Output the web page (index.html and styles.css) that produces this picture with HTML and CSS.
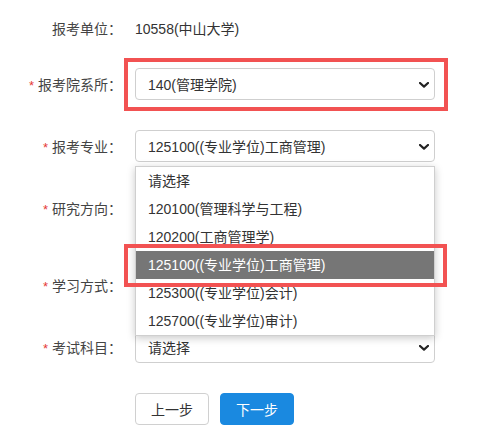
FILE: index.html
```html
<!DOCTYPE html>
<html lang="zh-CN">
<head>
<meta charset="utf-8">
<title>报考信息</title>
<link rel="stylesheet" href="styles.css">
</head>
<body>
<div class="form">
  <div class="row row-first">
    <div class="label">报考单位：</div>
    <div class="field"><span class="value">10558(中山大学)</span></div>
  </div>
  <div class="row">
    <div class="label"><span class="req">*</span>报考院系所：</div>
    <div class="field">
      <div class="select">
        <span>140(管理学院)</span>
        <svg class="chev" width="10" height="6" viewBox="0 0 10 6"><path d="M1 1L5 4.6L9 1" fill="none" stroke="#222" stroke-width="2.2" stroke-linecap="round" stroke-linejoin="round"/></svg>
      </div>
      <div class="mark mark-1"></div>
    </div>
  </div>
  <div class="row">
    <div class="label"><span class="req">*</span>报考专业：</div>
    <div class="field">
      <div class="select">
        <span>125100((专业学位)工商管理)</span>
        <svg class="chev" width="10" height="6" viewBox="0 0 10 6"><path d="M1 1L5 4.6L9 1" fill="none" stroke="#222" stroke-width="2.2" stroke-linecap="round" stroke-linejoin="round"/></svg>
      </div>
      <ul class="dropdown">
        <li>请选择</li>
        <li>120100(管理科学与工程)</li>
        <li>120200(工商管理学)</li>
        <li class="active">125100((专业学位)工商管理)<div class="mark mark-2"></div></li>
        <li>125300((专业学位)会计)</li>
        <li>125700((专业学位)审计)</li>
      </ul>
    </div>
  </div>
  <div class="row row-tall">
    <div class="label"><span class="req">*</span>研究方向：</div>
    <div class="field"></div>
  </div>
  <div class="row">
    <div class="label"><span class="req">*</span>学习方式：</div>
    <div class="field"></div>
  </div>
  <div class="row">
    <div class="label"><span class="req">*</span>考试科目：</div>
    <div class="field">
      <div class="select">
        <span>请选择</span>
        <svg class="chev" width="10" height="6" viewBox="0 0 10 6"><path d="M1 1L5 4.6L9 1" fill="none" stroke="#222" stroke-width="2.2" stroke-linecap="round" stroke-linejoin="round"/></svg>
      </div>
    </div>
  </div>
  <div class="row row-btns">
    <div class="label"></div>
    <div class="field buttons">
      <button class="btn btn-default">上一步</button>
      <button class="btn btn-primary">下一步</button>
    </div>
  </div>
</div>
</body>
</html>
```
FILE: styles.css
```css
html, body {
  margin: 0;
  padding: 0;
  background: #fff;
}
body {
  font-family: "Liberation Sans", "Noto Sans CJK SC", sans-serif;
  font-size: 14px;
  color: #333;
}
.form {
  padding-top: 12px;
}
.row {
  display: flex;
  align-items: center;
  height: 32px;
  margin-bottom: 30px;
}
.row-first {
  margin-bottom: 24px;
}
.row-tall {
  margin-bottom: 45px;
}
.row-btns {
  margin-top: 1px;
}
.label {
  width: 122px;
  flex: none;
  text-align: right;
  color: #444;
  white-space: nowrap;
}
.req {
  color: #e53935;
  margin-right: 4px;
  font-size: 13px;
}
.field {
  position: relative;
  margin-left: 13px;
  width: 300px;
  height: 32px;
  display: flex;
  align-items: center;
}
.value {
  color: #333;
}
.select {
  box-sizing: border-box;
  width: 300px;
  height: 32px;
  border: 1px solid #cfcfcf;
  border-radius: 4px;
  padding: 0 0 0 12px;
  display: flex;
  align-items: center;
  justify-content: space-between;
  color: #333;
  background: #fff;
}
.chev {
  margin-right: 5px;
  margin-top: 1px;
}
.dropdown {
  position: absolute;
  top: 36px;
  left: 0;
  width: 300px;
  box-sizing: border-box;
  margin: 0;
  padding: 0;
  list-style: none;
  background: #fff;
  border: 1px solid #cfcfcf;
  box-shadow: 0 2px 8px rgba(0, 0, 0, 0.22);
  z-index: 5;
}
.dropdown li {
  position: relative;
  height: 28px;
  line-height: 28px;
  padding-left: 12px;
  color: #333;
  white-space: nowrap;
}
.dropdown li.active {
  background: #767676;
  color: #fff;
}
.mark {
  position: absolute;
  border: 4px solid #f25252;
  z-index: 10;
  pointer-events: none;
}
.mark-1 {
  left: -11px;
  right: -13px;
  top: -10px;
  bottom: -11px;
}
.mark-2 {
  left: -12px;
  right: -13px;
  top: -7px;
  bottom: -8px;
}
.buttons {
  gap: 11px;
}
.btn {
  box-sizing: border-box;
  width: 74px;
  height: 32px;
  border-radius: 4px;
  font-family: "Liberation Sans", "Noto Sans CJK SC", sans-serif;
  font-size: 14px;
  padding: 0;
  cursor: pointer;
}
.btn-default {
  background: #fff;
  border: 1px solid #d0d0d0;
  color: #333;
}
.btn-primary {
  background: #1a89e0;
  border: 1px solid #1a89e0;
  color: #fff;
}
```
